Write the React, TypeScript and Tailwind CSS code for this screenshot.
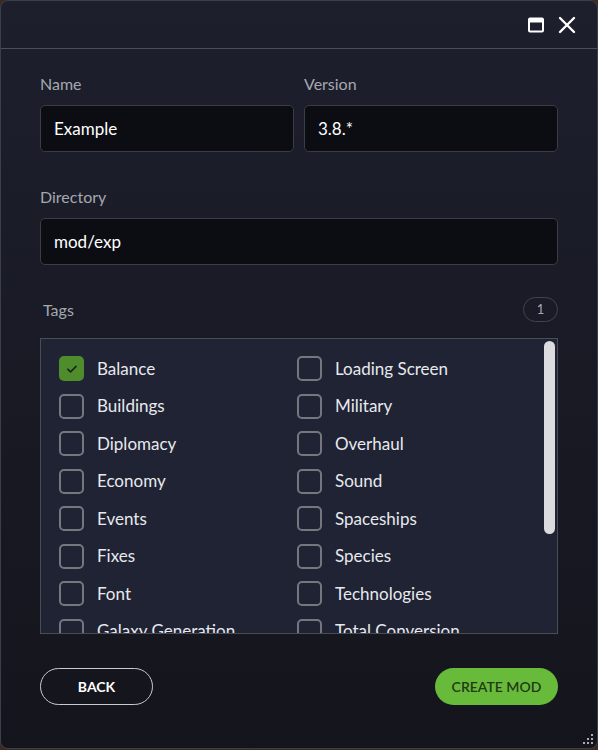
import { useState } from "react";

const tags = [
  "Balance",
  "Loading Screen",
  "Buildings",
  "Military",
  "Diplomacy",
  "Overhaul",
  "Economy",
  "Sound",
  "Events",
  "Spaceships",
  "Fixes",
  "Species",
  "Font",
  "Technologies",
  "Galaxy Generation",
  "Total Conversion",
  "Graphics",
  "Translation",
];

const inputCls =
  "h-[47px] w-full rounded-[5px] border border-[#3a3c46] bg-[#0c0d13] px-[13px] text-[17px] text-white outline-none";

const labelCls = "mb-[11px] text-[16px] leading-[20px] text-[#a6a8b0]";

function Checkbox({ checked }: { checked: boolean }) {
  if (checked) {
    return (
      <span className="flex h-[25px] w-[25px] shrink-0 items-center justify-center rounded-[5px] bg-[#4f8c2c]">
        <svg width="14" height="14" viewBox="0 0 24 24" fill="none" stroke="#1c2a14" strokeWidth="3" strokeLinecap="round" strokeLinejoin="round">
          <path d="M5 12.5l4.5 4.5L19 7.5" />
        </svg>
      </span>
    );
  }
  return <span className="h-[25px] w-[25px] shrink-0 rounded-[5px] border-2 border-[#75777e]" />;
}

export default function App() {
  const [selected] = useState<string[]>(["Balance"]);

  return (
    <div className="h-[750px] w-[598px] bg-[#3a2a20] font-['Lato',sans-serif]">
      <div className="flex h-[749px] w-[598px] flex-col overflow-hidden rounded-[8px] border border-[#3b3e4b] bg-gradient-to-b from-[#1d1f2d] to-[#14151c]">
        <div className="flex h-[48px] shrink-0 items-center justify-end gap-[14px] border-b border-[#4b4e5c] pr-[21px]">
          <svg width="16" height="16" viewBox="0 0 16 16" fill="none">
            <rect x="1" y="1.5" width="14" height="13" rx="1" stroke="white" strokeWidth="2" />
            <rect x="1" y="1.5" width="14" height="4" fill="white" />
          </svg>
          <svg width="18" height="18" viewBox="0 0 18 18" stroke="white" strokeWidth="2.4" strokeLinecap="round">
            <path d="M2 2l14 14M16 2L2 16" />
          </svg>
        </div>

        <div className="flex flex-1 flex-col px-[39px]">
          <div className="mt-[25px] grid grid-cols-2 gap-[10px]">
            <div className="flex flex-col">
              <label className={labelCls}>Name</label>
              <input className={inputCls} defaultValue="Example" />
            </div>
            <div className="flex flex-col">
              <label className={labelCls}>Version</label>
              <input className={inputCls} defaultValue="3.8.*" />
            </div>
          </div>

          <div className="mt-[35px] flex flex-col">
            <label className={labelCls}>Directory</label>
            <input className={inputCls} defaultValue="mod/exp" />
          </div>

          <div className="mt-[32px] flex items-center justify-between pl-[3px]">
            <span className="text-[16px] text-[#a6a8b0]">Tags</span>
            <span className="flex h-[25px] w-[35px] items-center justify-center rounded-full border border-[#3f4250] text-[13px] text-[#a6a8b8]">
              1
            </span>
          </div>

          <div className="relative mt-[16px] h-[296px] overflow-hidden border border-[#4a4c56] bg-[#1f2333]">
            <div className="grid grid-cols-[238px_1fr] gap-y-[12.5px] pl-[18px] pt-[17px]">
              {tags.map((t) => (
                <div key={t} className="flex h-[25px] items-center gap-[13px]">
                  <Checkbox checked={selected.includes(t)} />
                  <span className="whitespace-nowrap text-[17px] text-[#e8e9ee]">{t}</span>
                </div>
              ))}
            </div>
            <div className="absolute right-[2px] top-[2px] h-[193px] w-[11px] rounded-full bg-[#dcdcde]" />
          </div>

          <div className="mt-[34px] flex items-center justify-between">
            <button className="h-[37px] w-[113px] rounded-full border border-[#c9cad0] text-[14px] font-bold uppercase text-white">
              Back
            </button>
            <button className="h-[37px] w-[123px] rounded-full bg-[#68bb3a] text-[14px] font-semibold uppercase text-[#1f3a15]">
              Create Mod
            </button>
          </div>
        </div>

        <div className="flex justify-end pb-[3px] pr-[3px]">
          <svg width="12" height="12" viewBox="0 0 12 12" fill="#cfd0d4">
            <circle cx="10" cy="2" r="1.1" />
            <circle cx="6" cy="6" r="1.1" />
            <circle cx="10" cy="6" r="1.1" />
            <circle cx="2" cy="10" r="1.1" />
            <circle cx="6" cy="10" r="1.1" />
            <circle cx="10" cy="10" r="1.1" />
          </svg>
        </div>
      </div>
    </div>
  );
}
